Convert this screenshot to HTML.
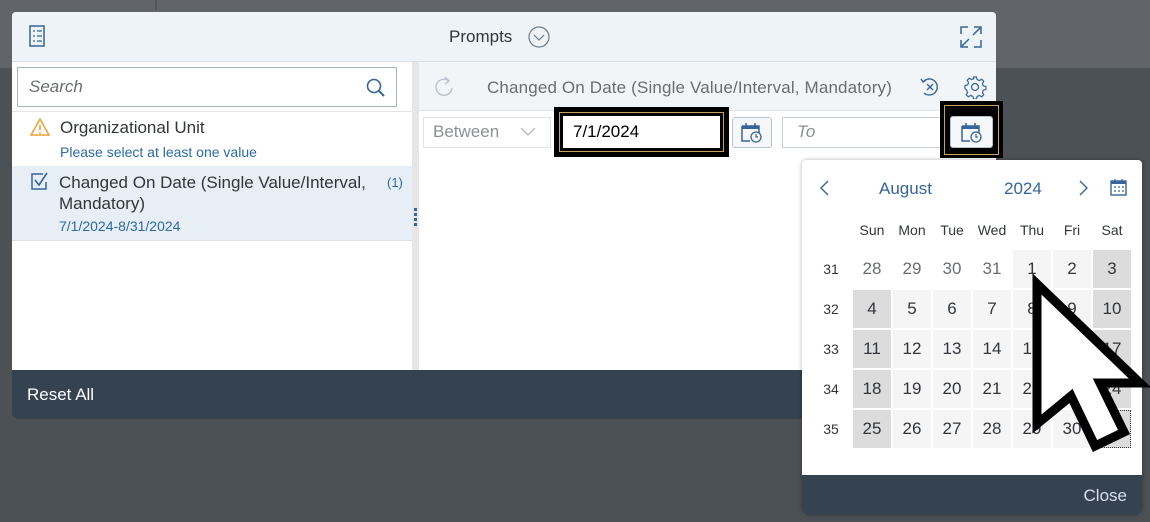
<!DOCTYPE html>
<html><head><style>
*{box-sizing:border-box;margin:0;padding:0}
body{width:1150px;height:522px;overflow:hidden;background:#4c5156;font-family:"Liberation Sans",sans-serif;position:relative}
.a{position:absolute}
.cell{position:absolute;width:38px;height:38px;text-align:center;line-height:38px;font-size:17px;color:#32363a;background:#f5f5f5}
.we{background:#dcdcdc}
.om{background:#fff;color:#6a6d70}
.wk{position:absolute;font-size:14px;color:#32363a;width:30px;text-align:center}
.dn{position:absolute;font-size:14px;color:#32363a;width:40px;text-align:center;top:222px}
</style></head><body>
<div class="a" style="left:0;top:0;width:1150px;height:68px;background:#616468"></div>
<div class="a" style="left:155px;top:0;width:2px;height:10px;background:#555"></div>
<!-- dialog -->
<div class="a" style="left:12px;top:12px;width:984px;height:407px;background:#fff;border-radius:4px;overflow:hidden">
 <div class="a" style="left:0;top:0;width:984px;height:50px;background:#eef3f8;border-bottom:1px solid #d9e0e7"></div>
 <svg class="a" style="left:17px;top:13px" width="16" height="22" viewBox="0 0 16 22"><rect x="1" y="1" width="14" height="20" fill="none" stroke="#35659a" stroke-width="1.5"/><path d="M4 6h2M8 6h5M4 11h2M8 11h5M4 16h2M8 16h5" stroke="#35659a" stroke-width="1.2"/></svg>
 <div class="a" style="left:437px;top:15px;font-size:17px;color:#32363a">Prompts</div>
 <svg class="a" style="left:516px;top:14px" width="22" height="22"><circle cx="11" cy="11" r="10" fill="none" stroke="#6a7b8c" stroke-width="1.2"/><path d="M6 9l5 5 5-5" fill="none" stroke="#6a7b8c" stroke-width="1.2"/></svg>
 <svg class="a" style="left:948px;top:14px" width="22" height="22"><path d="M1 8V1h7M14 1h7v7M21 14v7h-7M8 21H1v-7M13 9l7-7M9 13l-7 7" fill="none" stroke="#35659a" stroke-width="1.5"/></svg>
 <!-- left panel -->
 <div class="a" style="left:5px;top:55px;width:380px;height:40px;border:1px solid #a9b4be;background:#fff"></div>
 <div class="a" style="left:17px;top:65px;font-size:17px;font-style:italic;color:#6a6d70">Search</div>
 <svg class="a" style="left:354px;top:66px" width="20" height="20"><circle cx="8" cy="8" r="6.5" fill="none" stroke="#35659a" stroke-width="1.6"/><path d="M13 13l5 5" stroke="#35659a" stroke-width="2"/></svg>
 <div class="a" style="left:0;top:99px;width:400px;height:1px;background:#e5e5e5"></div>
 <svg class="a" style="left:18px;top:106px" width="20" height="18"><path d="M10 1L19 17H1z" fill="none" stroke="#e9a230" stroke-width="1.5"/><path d="M10 7v5M10 14v1.5" stroke="#e9a230" stroke-width="1.6"/></svg>
 <div class="a" style="left:48px;top:106px;font-size:17px;color:#32363a">Organizational Unit</div>
 <div class="a" style="left:48px;top:132px;font-size:14px;color:#2a6aa6">Please select at least one value</div>
 <div class="a" style="left:0;top:154px;width:400px;height:75px;background:#e8eef5;border-bottom:1px solid #e0e0e0"></div>
 <svg class="a" style="left:19px;top:160px" width="20" height="18"><path d="M12 2H1v15h14v-7" fill="none" stroke="#35659a" stroke-width="1.5"/><path d="M4 8l4 5 8-12" fill="none" stroke="#35659a" stroke-width="1.6"/></svg>
 <div class="a" style="left:47px;top:160px;font-size:17px;color:#32363a;line-height:21px;width:330px">Changed On Date (Single Value/Interval, Mandatory)</div>
 <div class="a" style="left:375px;top:163px;font-size:13px;color:#2a6aa6">(1)</div>
 <div class="a" style="left:47px;top:206px;font-size:14px;color:#2a6aa6">7/1/2024-8/31/2024</div>
 <div class="a" style="left:400px;top:50px;width:7px;height:308px;background:#e6e6e6"></div>
 <div class="a" style="left:402px;top:196px;width:3px;height:18px;background:repeating-linear-gradient(#35659a 0 3px,transparent 3px 5px)"></div>
 <!-- right panel -->
 <div class="a" style="left:407px;top:50px;width:577px;height:49px;background:#f2f5f8;border-bottom:1px solid #e0e4e8"></div>
 <svg class="a" style="left:422px;top:64px" width="20" height="22"><path d="M15 5A8 8 0 1 0 18 12" fill="none" stroke="#b8c2cc" stroke-width="1.4"/><path d="M11 1l4 4-4 3" fill="none" stroke="#b8c2cc" stroke-width="1.4"/></svg>
 <div class="a" style="left:475px;top:66px;font-size:17px;color:#6a6d70;letter-spacing:0.15px">Changed On Date (Single Value/Interval, Mandatory)</div>
 <svg class="a" style="left:907px;top:64px" width="22" height="22"><path d="M4 6A8 8 0 1 1 5 17" fill="none" stroke="#35659a" stroke-width="1.4"/><path d="M2 3l2 3 3-2M8 8l6 6M14 8l-6 6" fill="none" stroke="#35659a" stroke-width="1.4"/></svg>
 <svg class="a" style="left:951px;top:63px" width="24" height="24"><circle cx="12" cy="12" r="3.5" fill="none" stroke="#35659a" stroke-width="1.3"/><path d="M10.5 2h3l.6 2.6 2.3 1 2.3-1.4 2.1 2.1-1.4 2.3 1 2.3 2.6.6v3l-2.6.6-1 2.3 1.4 2.3-2.1 2.1-2.3-1.4-2.3 1-.6 2.6h-3l-.6-2.6-2.3-1-2.3 1.4-2.1-2.1 1.4-2.3-1-2.3L2 13.5v-3l2.6-.6 1-2.3-1.4-2.3 2.1-2.1 2.3 1.4 2.3-1z" fill="none" stroke="#35659a" stroke-width="1.2" stroke-linejoin="round"/></svg>
 <div class="a" style="left:411px;top:105px;width:128px;height:31px;border:1px solid #dfe3e8;background:#fff"></div>
 <div class="a" style="left:421px;top:110px;font-size:17px;color:#8c9096">Between</div>
 <svg class="a" style="left:508px;top:115px" width="16" height="10"><path d="M1 1l7 7 7-7" fill="none" stroke="#a8b0b8" stroke-width="1.2"/></svg>
 <div class="a" style="left:542px;top:95px;width:175px;height:50px;background:#000"></div>
 <div class="a" style="left:547px;top:100px;width:165px;height:40px;border:1px solid #c8a35a;background:#000"></div>
 <div class="a" style="left:551px;top:104px;width:157px;height:32px;background:#fff"></div>
 <div class="a" style="left:561px;top:110px;font-size:17px;color:#000">7/1/2024</div>
 <div class="a" style="left:720px;top:105px;width:40px;height:31px;border:1px solid #b8c2cc;border-radius:3px;background:#f5f7f9"></div>
 <svg class="a" style="left:729px;top:110px" width="22" height="22"><path d="M1 4h17v7M1 4v15h8" fill="none" stroke="#35659a" stroke-width="1.5"/><path d="M1 4h17v3H1z" fill="#35659a"/><path d="M5 1v4M14 1v4" stroke="#35659a" stroke-width="1.5"/><circle cx="15" cy="15" r="5" fill="none" stroke="#35659a" stroke-width="1.3"/><path d="M15 12v3h2" fill="none" stroke="#35659a" stroke-width="1.2"/></svg>
 <div class="a" style="left:770px;top:105px;width:160px;height:31px;border:1px solid #c8d0d8;background:#fff"></div>
 <div class="a" style="left:785px;top:110px;font-size:17px;font-style:italic;color:#8c9096">To</div>
</div>
<!-- second calendar button highlight -->
<div class="a" style="left:940px;top:101px;width:63px;height:57px;background:#000"></div>
<div class="a" style="left:944px;top:105px;width:55px;height:50px;border:1px solid #c8a35a"></div>
<div class="a" style="left:950px;top:116px;width:43px;height:32px;border:1px solid #b8c2cc;border-radius:3px;background:#f5f7f9"></div>
<svg class="a" style="left:961px;top:122px" width="22" height="22"><path d="M1 4h17v7M1 4v15h8" fill="none" stroke="#35659a" stroke-width="1.5"/><path d="M1 4h17v3H1z" fill="#35659a"/><path d="M5 1v4M14 1v4" stroke="#35659a" stroke-width="1.5"/><circle cx="15" cy="15" r="5" fill="none" stroke="#35659a" stroke-width="1.3"/><path d="M15 12v3h2" fill="none" stroke="#35659a" stroke-width="1.2"/></svg>
<!-- footer -->
<div class="a" style="left:12px;top:370px;width:984px;height:49px;background:#354250;border-radius:0 0 4px 4px"></div>
<div class="a" style="left:27px;top:385px;font-size:17px;color:#fff">Reset All</div>
<!-- calendar popup -->
<div class="a" style="left:802px;top:160px;width:340px;height:355px;background:#fff;border-radius:4px;overflow:hidden;box-shadow:0 0 4px rgba(0,0,0,.3)">
 <div class="a" style="left:0;top:315px;width:340px;height:40px;background:#354250"></div>
 <div class="a" style="right:15px;top:326px;font-size:17px;color:#d6e0ea">Close</div>
</div>
<svg class="a" style="left:818px;top:179px" width="12" height="18"><path d="M10 2L3 9l7 7" fill="none" stroke="#35659a" stroke-width="1.4"/></svg>
<div class="a" style="left:879px;top:179px;font-size:17px;color:#35659a">August</div>
<div class="a" style="left:1004px;top:179px;font-size:17px;color:#35659a">2024</div>
<svg class="a" style="left:1078px;top:179px" width="12" height="18"><path d="M2 2l7 7-7 7" fill="none" stroke="#35659a" stroke-width="1.4"/></svg>
<svg class="a" style="left:1110px;top:178px" width="17" height="18"><rect x="1" y="3" width="15" height="14" fill="none" stroke="#35659a" stroke-width="1.4"/><rect x="1" y="3" width="15" height="3" fill="#35659a"/><path d="M5 1v3M12 1v3M4 9h2M8 9h2M12 9h2M4 13h2M8 13h2M12 13h2" stroke="#35659a" stroke-width="1.3"/></svg>
<div class="dn" style="left:852px">Sun</div><div class="dn" style="left:892px">Mon</div><div class="dn" style="left:932px">Tue</div><div class="dn" style="left:972px">Wed</div><div class="dn" style="left:1012px">Thu</div><div class="dn" style="left:1052px">Fri</div><div class="dn" style="left:1092px">Sat</div>
<div class="wk" style="left:816px;top:261px">31</div><div class="wk" style="left:816px;top:301px">32</div><div class="wk" style="left:816px;top:341px">33</div><div class="wk" style="left:816px;top:381px">34</div><div class="wk" style="left:816px;top:421px">35</div>
<div class="cell om" style="left:853px;top:250px">28</div><div class="cell om" style="left:893px;top:250px">29</div><div class="cell om" style="left:933px;top:250px">30</div><div class="cell om" style="left:973px;top:250px">31</div><div class="cell" style="left:1013px;top:250px">1</div><div class="cell" style="left:1053px;top:250px">2</div><div class="cell we" style="left:1093px;top:250px">3</div>
<div class="cell we" style="left:853px;top:290px">4</div><div class="cell" style="left:893px;top:290px">5</div><div class="cell" style="left:933px;top:290px">6</div><div class="cell" style="left:973px;top:290px">7</div><div class="cell" style="left:1013px;top:290px">8</div><div class="cell" style="left:1053px;top:290px">9</div><div class="cell we" style="left:1093px;top:290px">10</div>
<div class="cell we" style="left:853px;top:330px">11</div><div class="cell" style="left:893px;top:330px">12</div><div class="cell" style="left:933px;top:330px">13</div><div class="cell" style="left:973px;top:330px">14</div><div class="cell" style="left:1013px;top:330px">15</div><div class="cell" style="left:1053px;top:330px">16</div><div class="cell we" style="left:1093px;top:330px">17</div>
<div class="cell we" style="left:853px;top:370px">18</div><div class="cell" style="left:893px;top:370px">19</div><div class="cell" style="left:933px;top:370px">20</div><div class="cell" style="left:973px;top:370px">21</div><div class="cell" style="left:1013px;top:370px">22</div><div class="cell" style="left:1053px;top:370px">23</div><div class="cell we" style="left:1093px;top:370px">24</div>
<div class="cell we" style="left:853px;top:410px">25</div><div class="cell" style="left:893px;top:410px">26</div><div class="cell" style="left:933px;top:410px">27</div><div class="cell" style="left:973px;top:410px">28</div><div class="cell" style="left:1013px;top:410px">29</div><div class="cell" style="left:1053px;top:410px">30</div><div class="cell we" style="left:1093px;top:410px;border:1px dotted #333">31</div>
<!-- cursor -->
<svg class="a" style="left:0;top:0" width="1150" height="522"><polygon points="1037,284 1037,424 1071,396 1095,446 1124,432 1100,383 1140,383" fill="#fff" stroke="#000" stroke-width="9" stroke-linejoin="miter"/></svg>
</body></html>
